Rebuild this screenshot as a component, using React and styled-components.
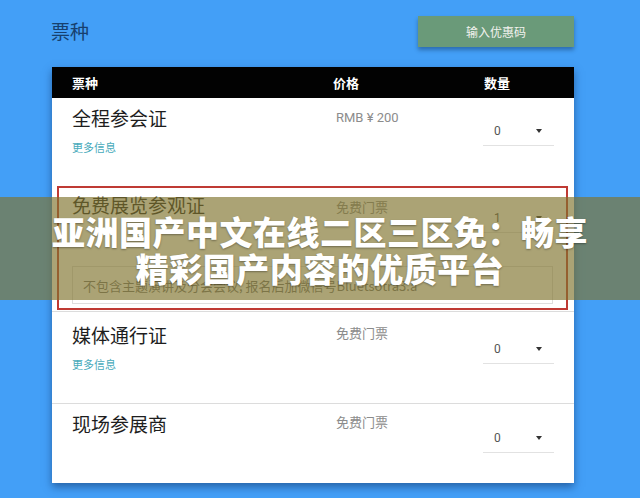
import React from "react";
import styled, { createGlobalStyle } from "styled-components";

const Global = createGlobalStyle`
  html, body { margin: 0; padding: 0; }
  body {
    background: #439ff7;
    font-family: "Noto Sans CJK SC", "Noto Sans", sans-serif;
    width: 640px;
    height: 498px;
    overflow: hidden;
  }
`;

const Page = styled.div`
  position: relative;
  width: 640px;
  height: 498px;
  padding: 16px 66px 0 52px;
  box-sizing: border-box;
`;

const TopBar = styled.div`
  display: flex;
  justify-content: space-between;
  align-items: flex-start;
  height: 51px;
`;

const Title = styled.h1`
  margin: 3px 0 0 -1px;
  font-size: 19px;
  font-weight: 400;
  line-height: 24px;
  color: #173f6e;
`;

const PromoButton = styled.button`
  width: 156px;
  height: 31px;
  border: none;
  background: #6a9a79;
  color: #f2f2ee;
  font-family: "Noto Sans CJK SC", sans-serif;
  font-size: 12px;
  box-shadow: 0 3px 4px rgba(20, 50, 90, 0.45);
  padding: 0;
`;

const Card = styled.div`
  background: #fff;
  box-shadow: 0 4px 8px rgba(10, 40, 90, 0.5);
`;

const Grid = styled.div`
  display: grid;
  grid-template-columns: 264px 147px 71px;
  padding-left: 20px;
`;

const Header = styled(Grid)`
  background: #020202;
  height: 31px;
  align-items: center;
  color: #fff;
  font-weight: 700;
  font-size: 13px;
`;

const HeadCell = styled.div`
  margin-left: ${(p) => p.$shift || 0}px;
`;

const Row = styled(Grid)`
  height: ${(p) => p.$h}px;
  box-sizing: border-box;
  padding-top: ${(p) => p.$top}px;
  border-top: ${(p) => (p.$sep ? "1px solid #dcdcdc" : "none")};
  align-content: start;
`;

const Highlight = styled.div`
  margin: 1px 6px 1px 5px;
  border: 2px solid #bf3a34;
  height: 124px;
  box-sizing: border-box;
  padding: 5px 12px 0 13px;
`;

const HighlightGrid = styled.div`
  display: grid;
  grid-template-columns: 264px 147px 71px;
`;

const Name = styled.div`
  font-size: 19px;
  line-height: 24px;
  color: #1e1e1e;
`;

const More = styled.div`
  margin-top: 10px;
  font-size: 11px;
  line-height: 14px;
  color: #47aabb;
`;

const Price = styled.div`
  padding-top: ${(p) => p.$top || 2}px;
  font-family: Roboto, "Noto Sans CJK SC", sans-serif;
  font-size: 13px;
  line-height: 17px;
  color: #8c8c8c;
`;

const Select = styled.div`
  margin-top: ${(p) => p.$top}px;
  height: 28px;
  box-sizing: border-box;
  display: flex;
  align-items: center;
  justify-content: space-between;
  padding: 0 12px 1px 11px;
  border-bottom: 1px solid #e2e2e2;
  font-family: Roboto, sans-serif;
  font-size: 12px;
  color: #555;
`;

const Caret = styled.span`
  width: 0;
  height: 0;
  border-left: 3px solid transparent;
  border-right: 3px solid transparent;
  border-top: 4px solid #333;
`;

const NoteBox = styled.div`
  margin-top: 33px;
  height: 38px;
  border: 1px solid #dedede;
  box-sizing: border-box;
  padding: 0 10px;
  display: flex;
  align-items: center;
  font-size: 13px;
  color: #777;
  width: 481px;
`;

const Banner = styled.div`
  position: absolute;
  left: 0;
  right: 0;
  top: 197px;
  height: 103px;
  background: rgba(128, 116, 45, 0.66);
  box-sizing: border-box;
  padding-top: 16px;
  text-align: center;
  color: #fff;
  font-family: "Noto Sans CJK SC", sans-serif;
  font-weight: 900;
  font-size: 33px;
  line-height: 37px;
  letter-spacing: 0.5px;
  text-shadow: 0 1px 2px rgba(0, 0, 0, 0.35);
`;

export default function App() {
  return (
    <>
      <Global />
      <Page>
        <TopBar>
          <Title>票种</Title>
          <PromoButton>输入优惠码</PromoButton>
        </TopBar>
        <Card>
          <Header>
            <HeadCell>票种</HeadCell>
            <HeadCell $shift={-3}>价格</HeadCell>
            <HeadCell $shift={1}>数量</HeadCell>
          </Header>
          <Row $h={87} $top={8}>
            <div>
              <Name>全程参会证</Name>
              <More>更多信息</More>
            </div>
            <Price $top={3}>RMB ¥ 200</Price>
            <Select $top={12}>
              0<Caret />
            </Select>
          </Row>
          <Highlight>
            <HighlightGrid>
              <Name>免费展览参观证</Name>
              <Price $top={6}>免费门票</Price>
              <Select $top={12}>
                1<Caret />
              </Select>
            </HighlightGrid>
            <NoteBox>不包含主题演讲及分会会议; 报名后加微信号Bluetsotra3.a</NoteBox>
          </Highlight>
          <Row $h={92} $top={11} $sep>
            <div>
              <Name>媒体通行证</Name>
              <More>更多信息</More>
            </div>
            <Price $top={2}>免费门票</Price>
            <Select $top={13}>
              0<Caret />
            </Select>
          </Row>
          <Row $h={80} $top={8} $sep>
            <div>
              <Name>现场参展商</Name>
            </div>
            <Price $top={2}>免费门票</Price>
            <Select $top={13}>
              0<Caret />
            </Select>
          </Row>
        </Card>
        <Banner>
          亚洲国产中文在线二区三区免：畅享
          <br />
          精彩国产内容的优质平台
        </Banner>
      </Page>
    </>
  );
}
